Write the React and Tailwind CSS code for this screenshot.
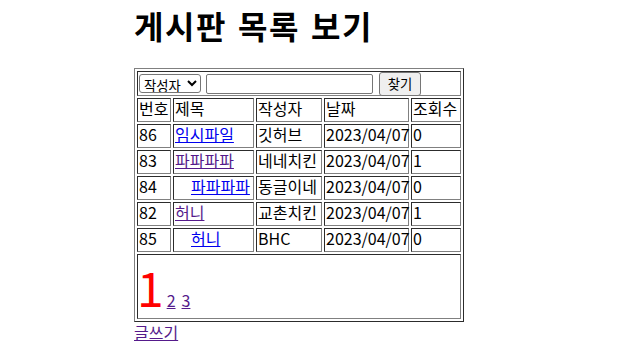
import React from "react";

const td = "border border-[gray] [border-style:inset] p-[1px] text-left align-middle";

const rows = [
  { no: "86", title: "임시파일", indent: false, visited: false, writer: "깃허브", date: "2023/04/07", hit: "0" },
  { no: "83", title: "파파파파", indent: false, visited: true, writer: "네네치킨", date: "2023/04/07", hit: "1" },
  { no: "84", title: "파파파파", indent: true, visited: false, writer: "동글이네", date: "2023/04/07", hit: "0" },
  { no: "82", title: "허니", indent: false, visited: true, writer: "교촌치킨", date: "2023/04/07", hit: "1" },
  { no: "85", title: "허니", indent: true, visited: false, writer: "BHC", date: "2023/04/07", hit: "0" },
];

export default function App() {
  return (
    <div className="w-[630px] h-[363px] bg-white text-black font-['Noto_Sans_CJK_KR',sans-serif] pl-[134px] overflow-hidden">
      <h1 className="text-[32px] font-bold leading-[40px] pt-[5px] m-0 whitespace-nowrap tracking-[1.6px] [word-spacing:2px]">게시판 목록 보기</h1>
      <table className="mt-[23px] table-fixed w-[330px] border-separate border-spacing-[2px] border border-[gray] [border-style:outset] text-[16px] leading-[20px]">
        <colgroup>
          <col className="w-[34px]" />
          <col className="w-[81px]" />
          <col className="w-[66px]" />
          <col className="w-[85px]" />
          <col className="w-[50px]" />
        </colgroup>
        <tbody>
          <tr>
            <td colSpan={5} className={td}>
              <div className="flex items-center h-[21px]">
                <select className="w-[62px] h-[19px] text-[13.33px] leading-[17px] border border-[#767676] rounded-[3px] bg-white" defaultValue="writer">
                  <option value="writer">작성자</option>
                  <option value="title">제목</option>
                </select>
                <input type="text" className="ml-[5px] w-[167px] h-[20px] border border-[#767676] rounded-[2px] bg-white" />
                <button className="ml-[6px] w-[42px] h-[24px] shrink-0 bg-[#efefef] border border-[#767676] rounded-[3px] text-[13.33px] leading-[18px]">찾기</button>
              </div>
            </td>
          </tr>
          <tr>
            <td className={td}><span className="relative top-[-2px]">번호</span></td>
            <td className={td}><span className="relative top-[-2px]">제목</span></td>
            <td className={td}><span className="relative top-[-2px]">작성자</span></td>
            <td className={td}><span className="relative top-[-2px]">날짜</span></td>
            <td className={td}><span className="relative top-[-2px] whitespace-nowrap">조회수</span></td>
          </tr>
          {rows.map((r) => (
            <tr key={r.no}>
              <td className={td}><span className="relative top-[-2px]">{r.no}</span></td>
              <td className={td + " whitespace-nowrap"}>
                <span className="relative top-[-2px]">
                  {r.indent && <span className="inline-block w-[16px]" />}
                  <a href="#" className={"underline " + (r.visited ? "text-[#551a8b]" : "text-[#0000ee]")}>{r.title}</a>
                </span>
              </td>
              <td className={td + " whitespace-nowrap"}><span className="relative top-[-2px]">{r.writer}</span></td>
              <td className={td + " whitespace-nowrap"}><span className="relative top-[-2px]">{r.date}</span></td>
              <td className={td}><span className="relative top-[-2px]">{r.hit}</span></td>
            </tr>
          ))}
          <tr>
            <td colSpan={5} className={td}>
              <div className="h-[61px] leading-[61px] whitespace-nowrap">
                <span className="text-[48px] text-[#ff0000] ml-[-2px] mr-[3px]">1</span>
                <a href="#" className="text-[16px] underline text-[#551a8b]">2</a>
                <span className="inline-block w-[6px]" />
                <a href="#" className="text-[16px] underline text-[#551a8b]">3</a>
              </div>
            </td>
          </tr>
        </tbody>
      </table>
      <a href="#" className="block w-fit text-[16px] leading-[20px] underline text-[#551a8b]">글쓰기</a>
    </div>
  );
}
